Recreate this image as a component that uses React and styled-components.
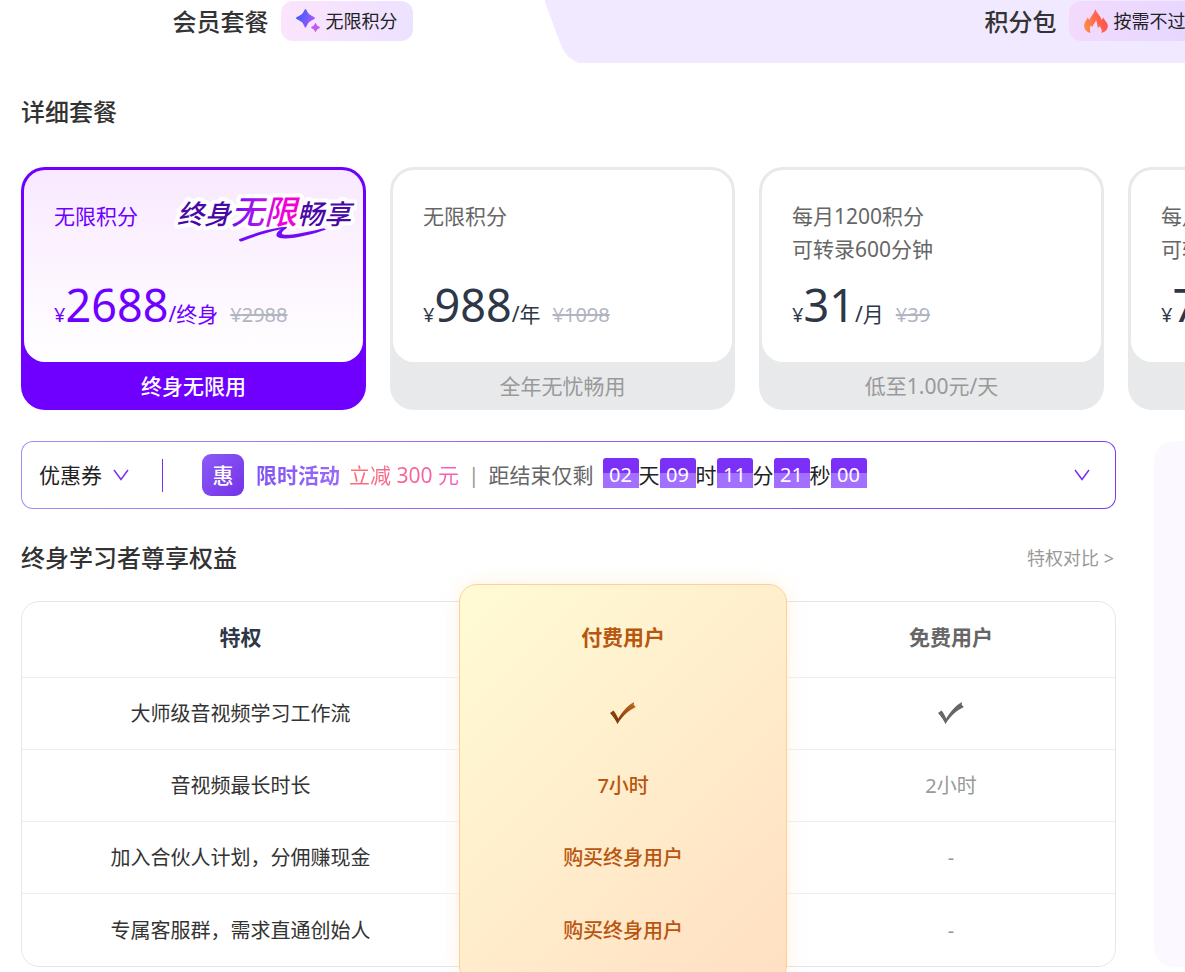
import { Fragment } from 'react';
import styled, { createGlobalStyle } from 'styled-components';

const GlobalStyle = createGlobalStyle`
  *, *::before, *::after {
    box-sizing: border-box;
  }
  body {
    margin: 0;
    background: #fff;
    color: #333;
    font-family: 'Noto Sans', 'Noto Sans CJK SC', sans-serif;
    font-size: 21px;
    line-height: 33px;
  }
  button {
    font: inherit;
    color: inherit;
    border: 0;
    margin: 0;
    padding: 0;
    background: none;
    cursor: pointer;
  }
  svg {
    display: block;
    flex: none;
  }
`;

const PageStyles = styled.div`
  overflow-x: hidden;
  padding-bottom: 24px;
`;

const Tabs = styled.header`
  display: flex;
`;

const Tab = styled.button`
  display: flex;
  flex: 0 0 ${({ $width }) => $width};
  justify-content: center;
  align-items: center;
  gap: 12px;
  height: 63px;
  padding-bottom: 21px;
  padding-left: ${({ $active }) => ($active ? '40px' : '0')};
  font-size: 24px;
  font-weight: 500;
  white-space: nowrap;
`;

const MutedTab = styled.div`
  display: flex;
  flex: 0 0 94%;
  button {
    flex: 1;
    margin-left: -1px;
    padding-right: 36px;
    background: #f1e9ff;
  }
`;

const Tag = styled.span`
  display: flex;
  align-items: center;
  gap: 6px;
  height: 40px;
  padding: 0 15px;
  border-radius: 12px;
  background: linear-gradient(100deg, ${({ $from, $to }) => `${$from}, ${$to}`});
  color: #222;
  font-size: 18px;
  font-weight: 400;
`;

const Title = styled.h2`
  margin: 0;
  font-size: 24px;
  font-weight: 500;
  line-height: 36px;
`;

const PlanSection = styled.section`
  padding: 31px 0 0 21px;
`;

const PlanList = styled.div`
  display: flex;
  gap: 24px;
  padding-top: 37px;
`;

const PlanCard = styled.button`
  flex: 0 0 345px;
  padding: 3px;
  border-radius: 24px;
  text-align: left;
  background: ${({ $active }) => ($active ? '#6f00ff' : '#e8e9eb')};
  .plan-body {
    position: relative;
    padding: 30px;
    height: 192px;
    border-radius: 21px;
    background: ${({ $active }) => ($active ? 'linear-gradient(180deg, #f9e9ff, #fff)' : '#fff')};
    color: ${({ $active }) => ($active ? '#6f00ff' : '#666')};
  }
  .plan-points {
    display: block;
    min-height: 66px;
    white-space: pre-line;
  }
  .plan-note {
    display: block;
    height: 45px;
    line-height: 48px;
    text-align: center;
    color: ${({ $active }) => ($active ? '#fff' : '#999')};
    font-weight: ${({ $active }) => ($active ? 500 : 400)};
  }
`;

const PlanBody = styled.span`
  display: block;
`;

const Price = styled.span`
  display: flex;
  align-items: baseline;
  color: ${({ $active }) => ($active ? '#6f00ff' : '#2d3748')};
  line-height: 78px;
  .currency {
    font-size: 20px;
  }
  .amount {
    font-size: 45px;
  }
  del {
    margin-left: 12px;
    font-size: 20px;
    color: #b0b5c0;
  }
`;

const Slogan = styled.svg`
  position: absolute;
  top: 20px;
  right: 6px;
  text {
    font-family: 'Noto Sans CJK SC', sans-serif;
    font-style: italic;
    font-weight: 500;
    paint-order: stroke;
    stroke: #fff;
    stroke-width: 8px;
    stroke-linejoin: round;
  }
`;

const Columns = styled.div`
  display: grid;
  grid-template-columns: minmax(0, 1fr) 31px;
  gap: 38px;
  padding: 31px 0 0 21px;
`;

const Aside = styled.aside`
  border-radius: 20px 0 0 20px;
  background: #fbf9ff;
`;

const CouponBar = styled.div`
  display: flex;
  align-items: center;
  height: 68px;
  padding: 0 25px 0 17px;
  border: 1px solid transparent;
  border-radius: 12px;
  background: linear-gradient(#fff, #fff) padding-box,
    linear-gradient(100deg, #a78bfa, #7c3aed) border-box;
  color: #222;
  white-space: nowrap;
`;

const CouponToggle = styled.button`
  display: flex;
  align-items: center;
  gap: 11px;
  padding-right: 33px;
`;

const Divider = styled.span`
  width: 1px;
  height: 33px;
  background: #7c2df0;
`;

const Expand = styled.button`
  margin-left: auto;
`;

const PromoBadge = styled.span`
  width: 42px;
  margin: 0 12px 0 39px;
  border-radius: 9px;
  background: linear-gradient(135deg, #8b5cf6, #7432e8);
  color: #fff;
  font-weight: 500;
  line-height: 42px;
  text-align: center;
`;

const GradientText = styled.span`
  margin-right: 9px;
  background: linear-gradient(90deg, ${({ $from, $to }) => `${$from}, ${$to}`});
  background-clip: text;
  color: transparent;
  font-weight: ${({ $bold }) => ($bold ? 700 : 400)};
`;

const Bar = styled.span`
  margin-right: 9px;
  color: #999;
`;

const Remaining = styled.span`
  margin-right: 9px;
  color: #666;
`;

const Countdown = styled.span`
  display: flex;
  align-items: center;
  b {
    width: 36px;
    height: 30px;
    margin-bottom: 4px;
    border-radius: 3px 3px 0 0;
    background: linear-gradient(#7b2ff7 50%, #a26fff 50%);
    color: #fff;
    font-size: 20px;
    font-weight: 400;
    line-height: 33px;
    text-align: center;
  }
`;

const RightsHead = styled.div`
  display: flex;
  justify-content: space-between;
  align-items: center;
  padding: 31px 2px 25px 0;
  a {
    color: #999;
    font-size: 18px;
    text-decoration: none;
  }
`;

const RightsFrame = styled.div`
  position: relative;
  border: 1px solid #e6e6e6;
  border-radius: 18px;
`;

const PaidColumn = styled.div`
  position: absolute;
  top: -18px;
  bottom: -18px;
  left: 40%;
  width: 30%;
  border: 1px solid #ffcf94;
  border-radius: 18px;
  background: linear-gradient(135deg, #fffbd5, #ffdfc2);
  box-shadow: 0 0 18px rgba(255, 200, 140, 0.25);
`;

const RightsTable = styled.table`
  position: relative;
  width: 100%;
  table-layout: fixed;
  border-collapse: separate;
  border-spacing: 0;
  font-size: 20px;
  text-align: center;
  th, td {
    width: 30%;
    height: 72px;
    padding: 0;
    border-bottom: 1px solid #eee;
    font-weight: 400;
  }
  thead th {
    height: 76px;
    padding-bottom: 4px;
    font-size: 21px;
    font-weight: 700;
  }
  tr > :first-child {
    width: 40%;
  }
  tr > :nth-child(2) {
    border-bottom-color: transparent;
    color: #b8560f;
    font-weight: 500;
  }
  tr > :nth-child(3) {
    color: #999;
  }
  thead tr > :first-child {
    color: #2d3748;
  }
  thead tr > :nth-child(2) {
    font-weight: 700;
  }
  thead tr > :nth-child(3) {
    color: #666;
  }
  tbody tr:last-child > * {
    border-bottom: 0;
  }
  svg {
    margin: 0 auto 2px;
  }
`;

const plans = [
  { points: '无限积分', price: '2688', unit: '终身', old: '2988', note: '终身无限用', active: true },
  { points: '无限积分', price: '988', unit: '年', old: '1098', note: '全年无忧畅用' },
  { points: '每月1200积分\n可转录600分钟', price: '31', unit: '月', old: '39', note: '低至1.00元/天' },
  { points: '每月3600积分\n可转录1800分钟', price: '78', unit: '月', old: '99', note: '低至2.60元/天' },
];

const countdown = [
  ['02', '天'],
  ['09', '时'],
  ['11', '分'],
  ['21', '秒'],
  ['00', ''],
];

const rights = [
  ['大师级音视频学习工作流', true, true],
  ['音视频最长时长', '7小时', '2小时'],
  ['加入合伙人计划，分佣赚现金', '购买终身用户', '-'],
  ['专属客服群，需求直通创始人', '购买终身用户', '-'],
];

function Sparkle() {
  return (
    <svg width="24" height="24" viewBox="0 0 24 24" aria-hidden="true">
      <defs>
        <linearGradient id="sparkle" x1="0" y1="0" x2="1" y2="0.4">
          <stop offset="0.2" stopColor="#3f5bff" />
          <stop offset="1" stopColor="#a25af8" />
        </linearGradient>
      </defs>
      <path
        fill="url(#sparkle)"
        d="M9.500 0c1 0 1.600 3 3.300 4.800C14.600 6.700 19 8.100 19 9.200s-4.400 2.300-6.200 4.200c-1.700 1.800-2.300 5.100-3.300 5.100s-1.600-3.300-3.300-5.100C4.400 11.500 0 10.300 0 9.200s4.400-2.500 6.200-4.400C7.900 3 8.500 0 9.500 0z"
      />
      <path
        fill="#c45cf0"
        d="M19.500 14c.6 0 .9 1.700 1.700 2.500.8.800 2.800 1.300 2.800 2s-2 1.200-2.800 2c-.8.800-1.100 2.500-1.700 2.500s-.9-1.700-1.700-2.500c-.8-.8-2.800-1.300-2.800-2s2-1.200 2.800-2c.8-.8 1.100-2.500 1.700-2.500z"
      />
    </svg>
  );
}

function Flame() {
  return (
    <svg width="24" height="24" viewBox="0 0 24 24" aria-hidden="true">
      <defs>
        <linearGradient id="flame" x1="0" y1="0.7" x2="1" y2="0.4">
          <stop offset="0" stopColor="#ff8a48" />
          <stop offset="1" stopColor="#ff4d4f" />
        </linearGradient>
      </defs>
      <path
        fill="url(#flame)"
        d="M11.500 0C12 3.500 17 7 17.500 11l2-2.500c.5 2.500 4.500 5 4.300 9-.3 3.500-2.800 5.500-6.300 6.500 1-3-.5-4.500-2-7L14 19c-1-2-.5-5-2-8-.5 3-3 4-3.500 7l-2-1.500c-1 2.500-.5 5 0 7.500-4-1-6.500-4-6.300-7.500C.5 12.500 3 11 3.500 8.500l2 2.500C6.500 7.500 10.500 4 11.500 0z"
      />
    </svg>
  );
}

function Chevron() {
  return (
    <svg width="16" height="12" viewBox="0 0 16 12" fill="none" stroke="#7c2df0" strokeWidth="1.5" aria-hidden="true">
      <path d="M1 1l7 9.500L15 1" />
    </svg>
  );
}

function Check({ paid }) {
  return (
    <svg width="26" height="22" viewBox="0 0 26 22" role="img" aria-label="支持">
      <defs>
        <linearGradient id="paid-check" x1="1" y1="0" x2="0.2" y2="1">
          <stop offset="0" stopColor="#c56b1d" />
          <stop offset="1" stopColor="#743505" />
        </linearGradient>
      </defs>
      <path
        fill={paid ? 'url(#paid-check)' : '#666'}
        d="M0 11l3.500-2.500c2 2.200 3.400 5 4.700 8C12.500 9.500 17.500 3.500 24 0l-.3 2.800L25.800 5C18.500 8.500 12.500 14 7.500 22 5.500 18 3 14 0 11z"
      />
    </svg>
  );
}

function SloganArt() {
  return (
    <Slogan width="186" height="56" viewBox="0 0 186 56">
      <defs>
        <linearGradient id="slogan" gradientUnits="userSpaceOnUse" x1="60" y1="0" x2="126" y2="0">
          <stop offset="0" stopColor="#6d0ff0" />
          <stop offset="0.45" stopColor="#b312ee" />
          <stop offset="0.75" stopColor="#f000dc" />
          <stop offset="1" stopColor="#f500cf" />
        </linearGradient>
      </defs>
      <text x="6" y="34" fontSize="27" fill="#4a08a8">
        终身
        <tspan fontSize="33" fill="url(#slogan)">无限</tspan>
        畅享
      </text>
      <path fill="#6f0cf5" d="M68.500 49c13-5 27-9.500 40-11.500l6.500-.5-.5 1.500-7 1.300c-12 3-24 6.400-37 11.600-1.500.6-3.500-1.700-2-2.400z" />
      <path
        fill="#6f0cf5"
        d="M106 39c3-1.300 6.500-2 9.500-2.200l.5 1.200c-3.500 2-6.500 5-4.500 6.300 4.500 2.200 27.500-2.500 41.500-6l2 1.200c-13 5-36.500 10.500-46 8.500-6-1.500-3.500-6 1-9z"
      />
    </Slogan>
  );
}

function Plan({ points, price, unit, old, note, active }) {
  return (
    <PlanCard type="button" $active={active} aria-pressed={!!active}>
      <PlanBody className="plan-body">
        <span className="plan-points">{points}</span>
        <Price $active={active}>
          <span className="currency">¥</span>
          <span className="amount">{price}</span>
          <span>/{unit}</span>
          <del>¥{old}</del>
        </Price>
        {active && <SloganArt />}
      </PlanBody>
      <span className="plan-note">{note}</span>
    </PlanCard>
  );
}

function Coupons() {
  return (
    <CouponBar>
      <CouponToggle type="button">
        优惠券
        <Chevron />
      </CouponToggle>
      <Divider />
      <PromoBadge>惠</PromoBadge>
      <GradientText $bold $from="#8054f5" $to="#9a6bf8">限时活动</GradientText>
      <GradientText $from="#ff6b6b" $to="#ee5fc0">立减 300 元</GradientText>
      <Bar>|</Bar>
      <Remaining>距结束仅剩</Remaining>
      <Countdown>
        {countdown.map(([value, unit]) => (
          <Fragment key={value}>
            <b>{value}</b>
            {unit}
          </Fragment>
        ))}
      </Countdown>
      <Expand type="button" aria-label="展开">
        <Chevron />
      </Expand>
    </CouponBar>
  );
}

function Rights() {
  return (
    <RightsFrame>
      <PaidColumn />
      <RightsTable>
        <thead>
          <tr>
            <th scope="col">特权</th>
            <th scope="col">付费用户</th>
            <th scope="col">免费用户</th>
          </tr>
        </thead>
        <tbody>
          {rights.map(([name, paid, free]) => (
            <tr key={name}>
              <th scope="row">{name}</th>
              <td>{paid === true ? <Check paid /> : paid}</td>
              <td>{free === true ? <Check /> : free}</td>
            </tr>
          ))}
        </tbody>
      </RightsTable>
    </RightsFrame>
  );
}

export default function App() {
  return (
    <PageStyles>
      <GlobalStyle />
      <Tabs>
        <Tab type="button" $active $width="46%">
          会员套餐
          <Tag $from="#fce4fd" $to="#ece2ff">
            <Sparkle />
            无限积分
          </Tag>
        </Tab>
        <MutedTab>
          <svg width="36" height="63" viewBox="0 0 36 63" aria-hidden="true">
            <path fill="#f1e9ff" d="M-1 0l17 45c4 10 10 15 18 18h2V0z" />
          </svg>
          <Tab type="button">
            积分包
            <Tag $from="#f3dafd" $to="#e3d6ff">
              <Flame />
              按需不过期
            </Tag>
          </Tab>
        </MutedTab>
      </Tabs>
      <PlanSection>
        <Title>详细套餐</Title>
        <PlanList>
          {plans.map((plan) => (
            <Plan key={plan.price} {...plan} />
          ))}
        </PlanList>
      </PlanSection>
      <Columns>
        <main>
          <Coupons />
          <RightsHead>
            <Title>终身学习者尊享权益</Title>
            <a href="#compare">特权对比 &gt;</a>
          </RightsHead>
          <Rights />
        </main>
        <Aside />
      </Columns>
    </PageStyles>
  );
}
